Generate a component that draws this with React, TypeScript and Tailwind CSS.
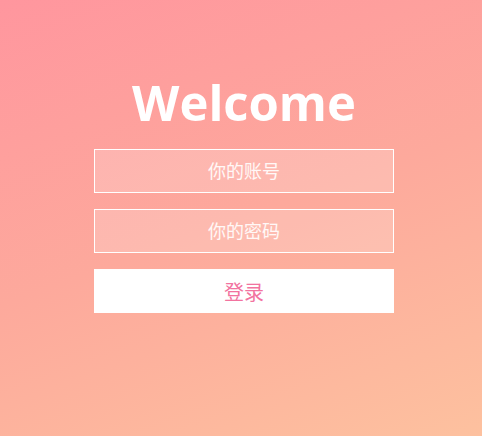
import React from 'react';

export default function App() {
  return (
    <div className="h-screen w-full bg-[linear-gradient(160deg,#ff969e_0%,#fda99c_50%,#fdc19f_100%)] flex flex-col items-center pt-[72px] pl-[6px] font-['Open_Sans','Noto_Sans_CJK_SC',sans-serif]">
      <h1 className="text-[49px] leading-[60px] font-bold text-white mb-[17px]">Welcome</h1>
      <div className="w-[300px] flex flex-col gap-4">
        <input
          type="text"
          placeholder="你的账号"
          className="h-[44px] w-full border border-white bg-white/20 text-center text-[18px] text-white placeholder:text-white/90 outline-none"
        />
        <input
          type="password"
          placeholder="你的密码"
          className="h-[44px] w-full border border-white bg-white/20 text-center text-[18px] text-white placeholder:text-white/90 outline-none"
        />
        <button className="h-[44px] w-full bg-white pt-1 text-[20px] text-[#f2739f]">登录</button>
      </div>
    </div>
  );
}
